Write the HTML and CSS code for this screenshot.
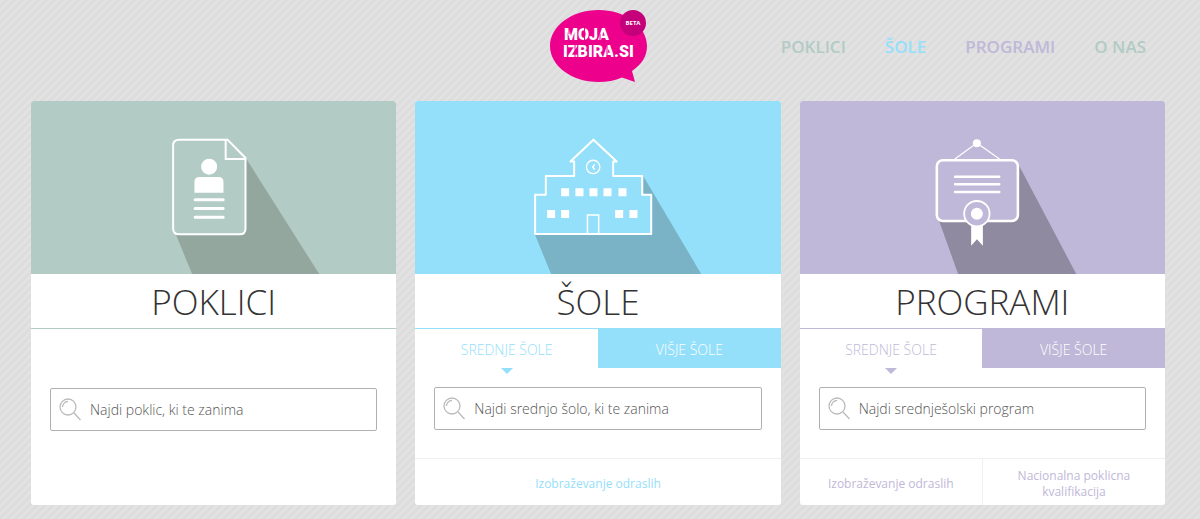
FILE: index.html
```html
<!DOCTYPE html>
<html lang="sl">
<head>
    <meta charset="UTF-8">
    <meta name="viewport" content="width=device-width, initial-scale=1.0">
    <title>Moja izbira</title>
    <link rel="stylesheet" href="styles.css">
</head>
<body>
    <header class="header">
        <a href="#" class="logo" aria-label="Moja izbira">
            <svg width="97" height="73" viewBox="0 0 97 73">
                <path d="M48.500 0C75 0 97 16 97 36C97 46 92 54 82 61L85 72L72 67.500C65 70.500 57 72 48.500 72C22 72 0 56 0 36S22 0 48.500 0Z" fill="#ec008c"/>
                <circle cx="83" cy="13" r="13" fill="#c4007a"/>
                <text x="83" y="15" class="logo-beta">BETA</text>
                <text x="14" y="30" class="logo-text">MOJA</text>
                <text x="13" y="47" class="logo-text">IZBIRA.SI</text>
                <path d="M34.500 17V31M19 17V24M50 24V31M25 34V48M37 34V41M57 34V48M64 41V48" stroke="#ec008c" stroke-width="1"/>
            </svg>
        </a>
        <nav class="nav">
            <a href="#" class="green">POKLICI</a>
            <a href="#" class="blue">ŠOLE</a>
            <a href="#" class="purple">PROGRAMI</a>
            <a href="#" class="green">O NAS</a>
        </nav>
    </header>

    <main class="cards">
        <section class="card green">
            <div class="picture">
                <svg viewBox="0 0 365 173" preserveAspectRatio="xMidYMid slice">
                    <path d="M145 134L161 173H288L214 56V128Q214 133 209 133Z" fill="#93a79f"/>
                    <path d="M148 38.700H196.300L214.300 57V127.500Q214.300 133.300 208.500 133.300H148Q142 133.300 142 127.500V44.500Q142 38.700 148 38.700Z" fill="#b2cbc4" stroke="#fff" stroke-width="2"/>
                    <path d="M194.500 39V58H214" fill="none" stroke="#fff" stroke-width="2"/>
                    <circle cx="178" cy="65.700" r="8" fill="#fff"/>
                    <path d="M163.300 91.700V81Q163.300 76 168.300 76H187.300Q192.300 76 192.300 81V91.700Z" fill="#fff"/>
                    <path d="M164 98.700H192M164 107.500H192M164 116.300H192" stroke="#fff" stroke-width="3" stroke-linecap="round"/>
                </svg>
            </div>
            <h2>POKLICI</h2>
            <form class="search search-only">
                <svg class="lens" viewBox="0 0 22 23">
                    <circle cx="9" cy="9" r="8"/>
                    <path d="M3.500 9A5.500 5.500 0 0 1 9 3.500M15 15L21.500 22"/>
                </svg>
                <input type="text" placeholder="Najdi poklic, ki te zanima" aria-label="Najdi poklic">
            </form>
        </section>

        <section class="card blue">
            <div class="picture">
                <svg viewBox="0 0 365 173" preserveAspectRatio="xMidYMid slice">
                    <path d="M120 134L136 173H286L228 75V94H236V134Z" fill="#79b3c5"/>
                    <path d="M120 133V93.700H130.700V75H159V60.500H155.300L178.300 38.700L201.500 60.500H198V75H227V93.700H236V133Z" fill="#94e0fb" stroke="#fff" stroke-width="2" stroke-linejoin="round"/>
                    <circle cx="178" cy="66" r="6.700" fill="none" stroke="#fff" stroke-width="1.300"/>
                    <path d="M179.500 63.500L177.500 66L179.500 68.500M172.300 133V114H183.500V133" fill="none" stroke="#fff" stroke-width="1.500"/>
                    <path d="M146 87.300h8v8h-8zM160.300 87.300h8v8h-8zM174.300 87.300h8v8h-8zM188.300 87.300h8v8h-8zM203.300 87.300h8v8h-8zM132 109h8v8h-8zM146 109h8v8h-8zM200 109h8v8h-8zM214.300 109h8v8h-8z" fill="#fff"/>
                </svg>
            </div>
            <h2>ŠOLE</h2>
            <div class="tabs">
                <button type="button" class="active">SREDNJE ŠOLE</button>
                <button type="button">VIŠJE ŠOLE</button>
            </div>
            <form class="search">
                <svg class="lens" viewBox="0 0 22 23">
                    <circle cx="9" cy="9" r="8"/>
                    <path d="M3.500 9A5.500 5.500 0 0 1 9 3.500M15 15L21.500 22"/>
                </svg>
                <input type="text" placeholder="Najdi srednjo šolo, ki te zanima" aria-label="Najdi srednjo šolo">
            </form>
            <div class="links">
                <a href="#">Izobraževanje odraslih</a>
            </div>
        </section>

        <section class="card purple">
            <div class="picture">
                <svg viewBox="0 0 365 173" preserveAspectRatio="xMidYMid slice">
                    <path d="M139 120L158 173H276L218 63Z" fill="#8f8aa0"/>
                    <path d="M154.700 58L176.700 42L199.300 58" fill="none" stroke="#fff" stroke-width="1.200"/>
                    <circle cx="176.700" cy="42.300" r="4" fill="#fff"/>
                    <rect x="136.700" y="59.300" width="81" height="60.700" rx="6" fill="#bfb8d8" stroke="#fff" stroke-width="2.600"/>
                    <path d="M155 75.700H199M155 83.300H199M155 91H199" stroke="#fff" stroke-width="2.600" stroke-linecap="round"/>
                    <path d="M171 124H182.700V144.700L176.800 138.300L171 144.700Z" fill="#fff"/>
                    <circle cx="176.700" cy="112.700" r="12.700" fill="#bfb8d8" stroke="#fff" stroke-width="1.800"/>
                    <circle cx="176.700" cy="112.700" r="6" fill="#fff"/>
                </svg>
            </div>
            <h2>PROGRAMI</h2>
            <div class="tabs">
                <button type="button" class="active">SREDNJE ŠOLE</button>
                <button type="button">VIŠJE ŠOLE</button>
            </div>
            <form class="search">
                <svg class="lens" viewBox="0 0 22 23">
                    <circle cx="9" cy="9" r="8"/>
                    <path d="M3.500 9A5.500 5.500 0 0 1 9 3.500M15 15L21.500 22"/>
                </svg>
                <input type="text" placeholder="Najdi srednješolski program" aria-label="Najdi srednješolski program">
            </form>
            <div class="links">
                <a href="#">Izobraževanje odraslih</a>
                <a href="#">Nacionalna poklicna kvalifikacija</a>
            </div>
        </section>
    </main>
</body>
</html>
```
FILE: styles.css
```css
* {
    box-sizing: border-box;
}

body {
    margin: 0;
    padding: 0 35px 14px 31px;
    font-family: 'Open Sans', sans-serif;
    font-weight: 300;
    background-color: #dedede;
    background-image: linear-gradient(135deg, #e2e2e2 25%, #dddddd 25%, #dddddd 50%, #e2e2e2 50%, #e2e2e2 75%, #dddddd 75%);
    background-size: 8px 8px;
}

.green {
    --color: #b2cbc4;
}

.blue {
    --color: #94e0fb;
}

.purple {
    --color: #bfb8d8;
}

/* Header */
.header {
    display: grid;
    grid-template-columns: 1fr auto 1fr;
    height: 101px;
    padding-top: 10px;
}

.logo {
    grid-column: 2;
}

.logo svg {
    display: block;
}

.logo-text {
    font-family: Roboto, sans-serif;
    font-weight: 900;
    font-size: 16px;
    fill: #fff;
}

.logo-beta {
    font-weight: 700;
    font-size: 6px;
    text-anchor: middle;
    fill: #fff;
}

.nav {
    display: flex;
    justify-content: flex-end;
    gap: 39px;
    padding: 25px 19px 0 0;
}

.nav a {
    color: var(--color);
    font-size: 17px;
    font-weight: 600;
    line-height: 24px;
    text-decoration: none;
    white-space: nowrap;
}

/* Cards */
.cards {
    display: grid;
    grid-template-columns: repeat(3, 1fr);
    gap: 19px;
}

.card {
    display: flex;
    flex-direction: column;
    min-height: 404px;
    border-radius: 3px;
    overflow: hidden;
    background: #fff;
}

.picture {
    height: 173px;
    background: var(--color);
}

.picture svg {
    display: block;
    width: 100%;
    height: 100%;
}

h2 {
    margin: 0;
    padding-top: 2px;
    border-bottom: 1px solid var(--color);
    color: #333;
    font-size: 35px;
    font-weight: 300;
    line-height: 52px;
    text-align: center;
}

.tabs {
    display: flex;
}

.tabs button {
    position: relative;
    flex: 1;
    height: 39px;
    padding: 2px 0 0;
    border: 0;
    background: var(--color);
    color: #fff;
    font: inherit;
    font-size: 14px;
    cursor: pointer;
}

.tabs .active {
    background: #fff;
    color: var(--color);
}

.tabs .active::after {
    content: "";
    position: absolute;
    top: 100%;
    left: 50%;
    margin-left: -6px;
    border: 6px solid transparent;
    border-top-color: var(--color);
    border-bottom: 0;
}

.search {
    display: flex;
    align-items: center;
    height: 43px;
    margin: 19px 19px 28px;
    padding-left: 8px;
    border: 1px solid #b0b0b0;
    border-radius: 2px;
}

.search-only {
    margin-top: 59px;
}

.lens {
    width: 22px;
    height: 23px;
    fill: none;
    stroke: #bbb;
    stroke-width: 1.3;
}

.search input {
    flex: 1;
    min-width: 0;
    height: 100%;
    padding: 0 9px;
    border: 0;
    outline: 0;
    background: none;
    color: #555;
    font: inherit;
    font-size: 14px;
}

.search input::placeholder {
    color: #555;
}

.links {
    display: flex;
    flex: 1;
    border-top: 1px solid #f0f0f0;
}

.links a {
    display: flex;
    flex: 1;
    align-items: center;
    justify-content: center;
    padding: 4px 24px 0;
    color: var(--color);
    font-size: 12px;
    font-weight: 400;
    line-height: 16px;
    text-align: center;
    text-decoration: none;
}

.links a + a {
    border-left: 1px solid #f0f0f0;
}
```
